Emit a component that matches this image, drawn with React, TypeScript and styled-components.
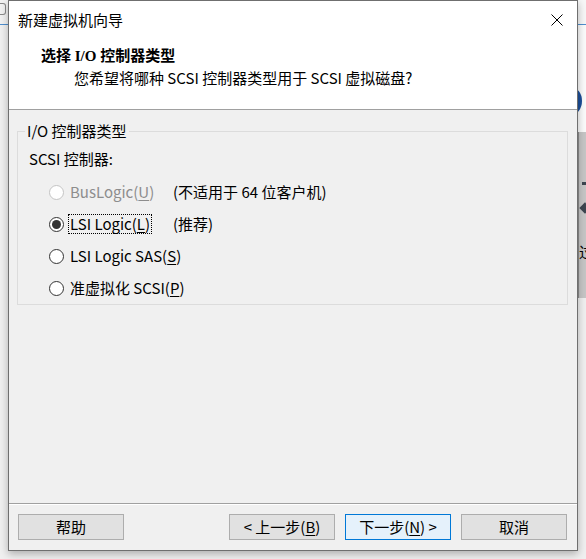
import styled, { createGlobalStyle } from "styled-components";

const GlobalStyle = createGlobalStyle`
  html, body {
    margin: 0;
    padding: 0;
    background: #f0f0f0;
  }
  * {
    box-sizing: border-box;
  }
`;

const uiFont = `"Noto Sans CJK SC", "Noto Sans", sans-serif`;

interface Option {
  label: string;
  key: string;
  note?: string;
  checked?: boolean;
  disabled?: boolean;
  focused?: boolean;
}

const options: Option[] = [
  { label: "BusLogic(", key: "U", note: "(不适用于 64 位客户机)", disabled: true },
  { label: "LSI Logic(", key: "L", note: "(推荐)", checked: true, focused: true },
  { label: "LSI Logic SAS(", key: "S" },
  { label: "准虚拟化 SCSI(", key: "P" },
];

export default function App() {
  return (
    <>
      <GlobalStyle />
      <Desktop>
        <LeftStrip>
          <StripTop>
            <PeekIcon />
          </StripTop>
          <StripLine />
        </LeftStrip>

        <Dialog>
          <TitleBar>
            <TitleText>新建虚拟机向导</TitleText>
            <CloseButton aria-label="关闭">
              <svg width="12" height="12" viewBox="0 0 12 12">
                <path d="M0.5 0.5 L11.5 11.5 M11.5 0.5 L0.5 11.5" stroke="#000" strokeWidth="1" />
              </svg>
            </CloseButton>
          </TitleBar>

          <Header>
            <HeaderTitle>选择 I/O 控制器类型</HeaderTitle>
            <HeaderSub>您希望将哪种 SCSI 控制器类型用于 SCSI 虚拟磁盘?</HeaderSub>
          </Header>

          <Body>
            <GroupBox>
              <GroupLegend>I/O 控制器类型</GroupLegend>
              <GroupLabel>SCSI 控制器:</GroupLabel>
              <OptionList>
                {options.map((o) => (
                  <OptionRow key={o.key}>
                    <RadioCircle $checked={o.checked} $disabled={o.disabled} />
                    <OptionLabel $disabled={o.disabled}>
                      <FocusBox $focused={o.focused}>
                        {o.label}
                        <u>{o.key}</u>)
                      </FocusBox>
                    </OptionLabel>
                    {o.note && <OptionNote>{o.note}</OptionNote>}
                  </OptionRow>
                ))}
              </OptionList>
            </GroupBox>
          </Body>

          <Footer>
            <WizardButton>帮助</WizardButton>
            <Spacer />
            <WizardButton>
              &lt; 上一步(<u>B</u>)
            </WizardButton>
            <WizardButton $primary>
              下一步(<u>N</u>) &gt;
            </WizardButton>
            <WizardButton>取消</WizardButton>
          </Footer>
        </Dialog>

        <RightStrip>
          <StripTop $light />
          <StripLine />
          <RightWhite>
            <PeekRing />
          </RightWhite>
          <RightBand>
            <BandDash />
            <BandArrow />
            <BandText>过</BandText>
          </RightBand>
        </RightStrip>
      </Desktop>
    </>
  );
}

const Desktop = styled.div`
  width: 586px;
  height: 559px;
  display: flex;
  overflow: hidden;
  background: #f0f0f0;
  font-family: ${uiFont};
`;

const LeftStrip = styled.div`
  width: 8px;
  display: flex;
  flex-direction: column;
  overflow: hidden;
`;

const StripTop = styled.div<{ $light?: boolean }>`
  height: 24px;
  background: ${(p) => (p.$light ? "#f7f7f7" : "#f2f2f2")};
  position: relative;
`;

const StripLine = styled.div`
  height: 1px;
  background: #4f8fcf;
`;

const PeekIcon = styled.div`
  position: absolute;
  left: 0;
  top: 3px;
  width: 6px;
  height: 12px;
  border: 1px solid #8a8a8a;
  border-left: none;
  border-radius: 0 3px 3px 0;
`;

const RightStrip = styled.div`
  width: 8px;
  display: flex;
  flex-direction: column;
  overflow: hidden;
`;

const RightWhite = styled.div`
  height: 107px;
  background: #fbfbfb;
  position: relative;
`;

const PeekRing = styled.div`
  position: absolute;
  left: -18px;
  top: 62px;
  width: 22px;
  height: 28px;
  border: 4px solid #1c4f9a;
  border-radius: 50%;
`;

const RightBand = styled.div`
  height: 166px;
  background: #c6c6c6;
  position: relative;
  border-left: 1px solid #8c8c8c;
`;

const BandDash = styled.div`
  position: absolute;
  left: 3px;
  top: 50px;
  width: 4px;
  height: 3px;
  background: #3d4650;
`;

const BandArrow = styled.div`
  position: absolute;
  left: 2px;
  top: 72px;
  width: 8px;
  height: 8px;
  background: #3d4650;
  transform: rotate(45deg);
`;

const BandText = styled.span`
  position: absolute;
  left: 0;
  top: 110px;
  font-size: 15px;
  line-height: 20px;
  color: #000;
`;

const Dialog = styled.div`
  width: 570px;
  height: 551px;
  display: flex;
  flex-direction: column;
  border: 1px solid #6f6f6f;
  background: #f0f0f0;
  box-shadow: 0 3px 8px rgba(0, 0, 0, 0.28);
  position: relative;
  z-index: 1;
`;

const TitleBar = styled.div`
  height: 37px;
  display: flex;
  align-items: center;
  justify-content: space-between;
  padding: 0 0 0 9px;
  background: #fff;
`;

const TitleText = styled.span`
  font-size: 15px;
  line-height: 20px;
  color: #000;
`;

const CloseButton = styled.div`
  width: 36px;
  height: 37px;
  display: flex;
  align-items: center;
  justify-content: center;
  margin-right: 2px;
`;

const Header = styled.div`
  height: 72px;
  display: flex;
  flex-direction: column;
  gap: 2px;
  padding: 8px 0 0 32px;
  background: #fff;
  border-bottom: 1px solid #a0a0a0;
`;

const HeaderTitle = styled.div`
  font-family: "Liberation Serif", "Noto Sans CJK SC", serif;
  font-size: 15px;
  font-weight: 700;
  line-height: 20px;
  color: #000;
`;

const HeaderSub = styled.div`
  font-size: 15px;
  line-height: 20px;
  padding-left: 33px;
  color: #000;
`;

const Body = styled.div`
  flex: 1;
  padding: 11px 9px 0 8px;
`;

const GroupBox = styled.fieldset`
  margin: 0;
  padding: 0 0 6px 11px;
  border: 1px solid #dcdcdc;
  min-width: 0;
`;

const GroupLegend = styled.legend`
  margin-left: -4px;
  padding: 0 2px 0 2px;
  font-size: 15px;
  line-height: 20px;
  color: #000;
`;

const GroupLabel = styled.div`
  margin-top: 8px;
  font-size: 15px;
  line-height: 20px;
  color: #000;
`;

const OptionList = styled.div`
  margin-top: 13px;
  padding-left: 20px;
  display: flex;
  flex-direction: column;
  gap: 12px;
`;

const OptionRow = styled.div`
  display: flex;
  align-items: center;
  height: 20px;
`;

const RadioCircle = styled.span<{ $checked?: boolean; $disabled?: boolean }>`
  width: 15px;
  height: 15px;
  flex: none;
  border-radius: 50%;
  border: 1px solid ${(p) => (p.$disabled ? "#c4c4c4" : "#333")};
  background: #fff;
  display: flex;
  align-items: center;
  justify-content: center;

  &::after {
    content: "";
    width: 9px;
    height: 9px;
    border-radius: 50%;
    background: #333;
    display: ${(p) => (p.$checked ? "block" : "none")};
  }
`;

const OptionLabel = styled.span<{ $disabled?: boolean }>`
  min-width: 109px;
  padding-left: 4px;
  font-size: 15px;
  line-height: 18px;
  color: ${(p) => (p.$disabled ? "#8d8d8d" : "#000")};

  & u {
    text-underline-offset: 2px;
  }
`;

const FocusBox = styled.span<{ $focused?: boolean }>`
  display: inline-block;
  padding: 0 1px;
  border: 1px dotted ${(p) => (p.$focused ? "#000" : "transparent")};
`;

const OptionNote = styled.span`
  font-size: 15px;
  line-height: 20px;
  color: #000;
`;

const Footer = styled.div`
  height: 47px;
  display: flex;
  align-items: flex-start;
  gap: 10px;
  padding: 10px 10px 0 9px;
  border-top: 1px solid #a0a0a0;
  box-shadow: inset 0 1px 0 #fff;
`;

const Spacer = styled.div`
  flex: 1;
`;

const WizardButton = styled.button<{ $primary?: boolean }>`
  width: 106px;
  height: 26px;
  padding: 0;
  font-family: ${uiFont};
  font-size: 15px;
  line-height: 20px;
  color: #000;
  background: ${(p) => (p.$primary ? "#e5f1fb" : "#e1e1e1")};
  border: 1px solid ${(p) => (p.$primary ? "#0078d7" : "#adadad")};
  border-radius: 0;

  & u {
    text-underline-offset: 2px;
  }
`;
